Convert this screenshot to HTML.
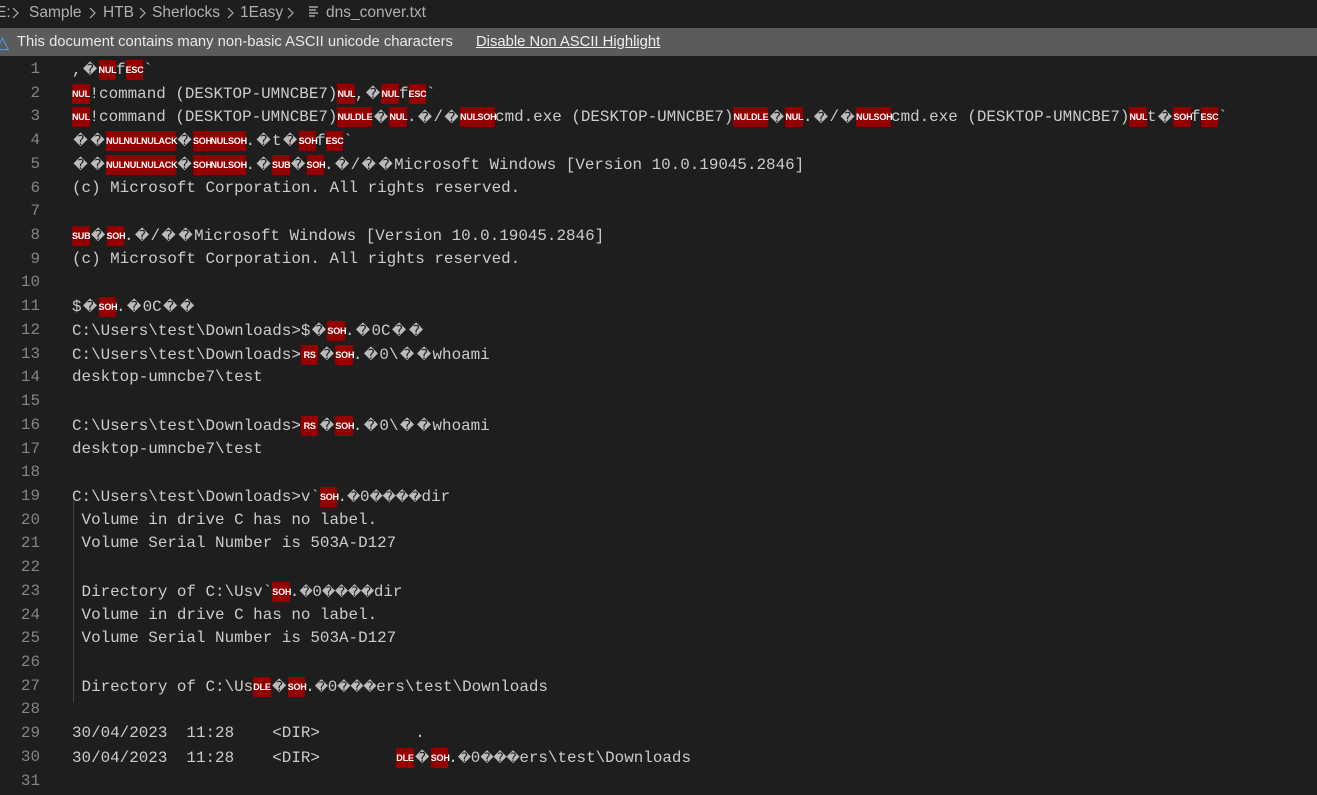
<!DOCTYPE html>
<html><head><meta charset="utf-8"><style>
html,body{margin:0;padding:0;background:#1e1e1e;width:1317px;height:789px;overflow:hidden}
.bc{position:absolute;top:0;left:0;right:0;height:26px;font:15.5px "Liberation Sans",sans-serif;color:#b0b0b0;line-height:25px;white-space:pre}
.bc span{position:absolute;top:0}
.bc svg{position:absolute;top:7px}
.warn{position:absolute;top:28px;left:0;right:0;height:28px;background:#5b5b5b;font:14.8px "Liberation Sans",sans-serif;color:#e8e8e8;line-height:29px}
.warn a{color:#f0f0f0;text-decoration:underline;position:absolute;left:476px}
.ed{position:absolute;top:60px;left:0;right:0}
.ln{position:relative;height:23.73px;line-height:23.73px;font:15.9px "Liberation Mono","DejaVu Sans Mono",monospace;color:#cccccc;white-space:pre}
.ln .n{position:absolute;left:0;width:40px;text-align:right;color:#858585}
.ln .t{position:absolute;left:72px}
.c{display:inline-block;width:17.5px;height:20px;background:#940000;color:#fff;font:bold 9px "Liberation Sans",sans-serif;line-height:20px;text-align:center;vertical-align:middle;letter-spacing:-0.2px}
.d{display:inline-block;width:17px;text-align:center;color:#bbb;font-family:"DejaVu Sans",sans-serif;font-size:14px;overflow:visible}
.e{display:inline-block;width:13px;text-align:center;color:#bbb;font-family:"DejaVu Sans",sans-serif;font-size:13px}
.guide{position:absolute;left:73px;top:500px;width:1px;height:203px;background:#45452f}
</style></head><body>
<div class="bc"><span style="left:-4px">E:</span>
<svg style="left:12px" width="7" height="12" viewBox="0 0 7 12"><path d="M1 1l5 5-5 5" fill="none" stroke="#b0b0b0" stroke-width="1.2"/></svg>
<span style="left:29px">Sample</span>
<svg style="left:89px" width="7" height="12" viewBox="0 0 7 12"><path d="M1 1l5 5-5 5" fill="none" stroke="#b0b0b0" stroke-width="1.2"/></svg>
<span style="left:103px">HTB</span>
<svg style="left:139px" width="7" height="12" viewBox="0 0 7 12"><path d="M1 1l5 5-5 5" fill="none" stroke="#b0b0b0" stroke-width="1.2"/></svg>
<span style="left:152px">Sherlocks</span>
<svg style="left:227px" width="7" height="12" viewBox="0 0 7 12"><path d="M1 1l5 5-5 5" fill="none" stroke="#b0b0b0" stroke-width="1.2"/></svg>
<span style="left:240px">1Easy</span>
<svg style="left:287px" width="7" height="12" viewBox="0 0 7 12"><path d="M1 1l5 5-5 5" fill="none" stroke="#b0b0b0" stroke-width="1.2"/></svg>
<svg style="left:308px;top:5px" width="12" height="14" viewBox="0 0 12 14"><path d="M1 2h9M1 5h7M1 8h9M1 11h6" stroke="#c0c0c0" stroke-width="1.2"/></svg>
<span style="left:326px">dns_conver.txt</span></div>
<div class="warn"><span style="position:absolute;left:-4px;top:0;color:#4aa3ff;font-size:17px">△</span><span style="position:absolute;left:17px">This document contains many non-basic ASCII unicode characters</span><a>Disable Non ASCII Highlight</a></div>
<div class="guide"></div>
<div class="ed">
<div class="ln"><span class="n">1</span><span class="t">,<span class="d">�</span><span class="c">NUL</span>f<span class="c">ESC</span>`</span></div>
<div class="ln"><span class="n">2</span><span class="t"><span class="c">NUL</span>!command (DESKTOP-UMNCBE7)<span class="c">NUL</span>,<span class="d">�</span><span class="c">NUL</span>f<span class="c">ESC</span>`</span></div>
<div class="ln"><span class="n">3</span><span class="t"><span class="c">NUL</span>!command (DESKTOP-UMNCBE7)<span class="c">NUL</span><span class="c">DLE</span><span class="d">�</span><span class="c">NUL</span>.<span class="d">�</span>/<span class="d">�</span><span class="c">NUL</span><span class="c">SOH</span>cmd.exe (DESKTOP-UMNCBE7)<span class="c">NUL</span><span class="c">DLE</span><span class="d">�</span><span class="c">NUL</span>.<span class="d">�</span>/<span class="d">�</span><span class="c">NUL</span><span class="c">SOH</span>cmd.exe (DESKTOP-UMNCBE7)<span class="c">NUL</span>t<span class="d">�</span><span class="c">SOH</span>f<span class="c">ESC</span>`</span></div>
<div class="ln"><span class="n">4</span><span class="t"><span class="d">�</span><span class="d">�</span><span class="c">NUL</span><span class="c">NUL</span><span class="c">NUL</span><span class="c">ACK</span><span class="d">�</span><span class="c">SOH</span><span class="c">NUL</span><span class="c">SOH</span>.<span class="d">�</span>t<span class="d">�</span><span class="c">SOH</span>f<span class="c">ESC</span>`</span></div>
<div class="ln"><span class="n">5</span><span class="t"><span class="d">�</span><span class="d">�</span><span class="c">NUL</span><span class="c">NUL</span><span class="c">NUL</span><span class="c">ACK</span><span class="d">�</span><span class="c">SOH</span><span class="c">NUL</span><span class="c">SOH</span>.<span class="d">�</span><span class="c">SUB</span><span class="d">�</span><span class="c">SOH</span>.<span class="d">�</span>/<span class="d">�</span><span class="d">�</span>Microsoft Windows [Version 10.0.19045.2846]</span></div>
<div class="ln"><span class="n">6</span><span class="t">(c) Microsoft Corporation. All rights reserved.</span></div>
<div class="ln"><span class="n">7</span><span class="t"></span></div>
<div class="ln"><span class="n">8</span><span class="t"><span class="c">SUB</span><span class="d">�</span><span class="c">SOH</span>.<span class="d">�</span>/<span class="d">�</span><span class="d">�</span>Microsoft Windows [Version 10.0.19045.2846]</span></div>
<div class="ln"><span class="n">9</span><span class="t">(c) Microsoft Corporation. All rights reserved.</span></div>
<div class="ln"><span class="n">10</span><span class="t"></span></div>
<div class="ln"><span class="n">11</span><span class="t">$<span class="d">�</span><span class="c">SOH</span>.<span class="d">�</span>0C<span class="d">�</span><span class="d">�</span></span></div>
<div class="ln"><span class="n">12</span><span class="t">C:\Users\test\Downloads&gt;$<span class="d">�</span><span class="c">SOH</span>.<span class="d">�</span>0C<span class="d">�</span><span class="d">�</span></span></div>
<div class="ln"><span class="n">13</span><span class="t">C:\Users\test\Downloads&gt;<span class="c">RS</span><span class="d">�</span><span class="c">SOH</span>.<span class="d">�</span>0\<span class="d">�</span><span class="d">�</span>whoami</span></div>
<div class="ln"><span class="n">14</span><span class="t">desktop-umncbe7\test</span></div>
<div class="ln"><span class="n">15</span><span class="t"></span></div>
<div class="ln"><span class="n">16</span><span class="t">C:\Users\test\Downloads&gt;<span class="c">RS</span><span class="d">�</span><span class="c">SOH</span>.<span class="d">�</span>0\<span class="d">�</span><span class="d">�</span>whoami</span></div>
<div class="ln"><span class="n">17</span><span class="t">desktop-umncbe7\test</span></div>
<div class="ln"><span class="n">18</span><span class="t"></span></div>
<div class="ln"><span class="n">19</span><span class="t">C:\Users\test\Downloads&gt;v`<span class="c">SOH</span>.<span class="e">�</span>0<span class="e">�</span><span class="e">�</span><span class="e">�</span><span class="e">�</span>dir</span></div>
<div class="ln"><span class="n">20</span><span class="t"> Volume in drive C has no label.</span></div>
<div class="ln"><span class="n">21</span><span class="t"> Volume Serial Number is 503A-D127</span></div>
<div class="ln"><span class="n">22</span><span class="t"></span></div>
<div class="ln"><span class="n">23</span><span class="t"> Directory of C:\Usv`<span class="c">SOH</span>.<span class="e">�</span>0<span class="e">�</span><span class="e">�</span><span class="e">�</span><span class="e">�</span>dir</span></div>
<div class="ln"><span class="n">24</span><span class="t"> Volume in drive C has no label.</span></div>
<div class="ln"><span class="n">25</span><span class="t"> Volume Serial Number is 503A-D127</span></div>
<div class="ln"><span class="n">26</span><span class="t"></span></div>
<div class="ln"><span class="n">27</span><span class="t"> Directory of C:\Us<span class="c">DLE</span><span class="d">�</span><span class="c">SOH</span>.<span class="e">�</span>0<span class="e">�</span><span class="e">�</span><span class="e">�</span>ers\test\Downloads</span></div>
<div class="ln"><span class="n">28</span><span class="t"></span></div>
<div class="ln"><span class="n">29</span><span class="t">30/04/2023  11:28    &lt;DIR&gt;          .</span></div>
<div class="ln"><span class="n">30</span><span class="t">30/04/2023  11:28    &lt;DIR&gt;        <span class="c">DLE</span><span class="d">�</span><span class="c">SOH</span>.<span class="e">�</span>0<span class="e">�</span><span class="e">�</span><span class="e">�</span>ers\test\Downloads</span></div>
<div class="ln"><span class="n">31</span><span class="t"></span></div>
</div>
</body></html>
